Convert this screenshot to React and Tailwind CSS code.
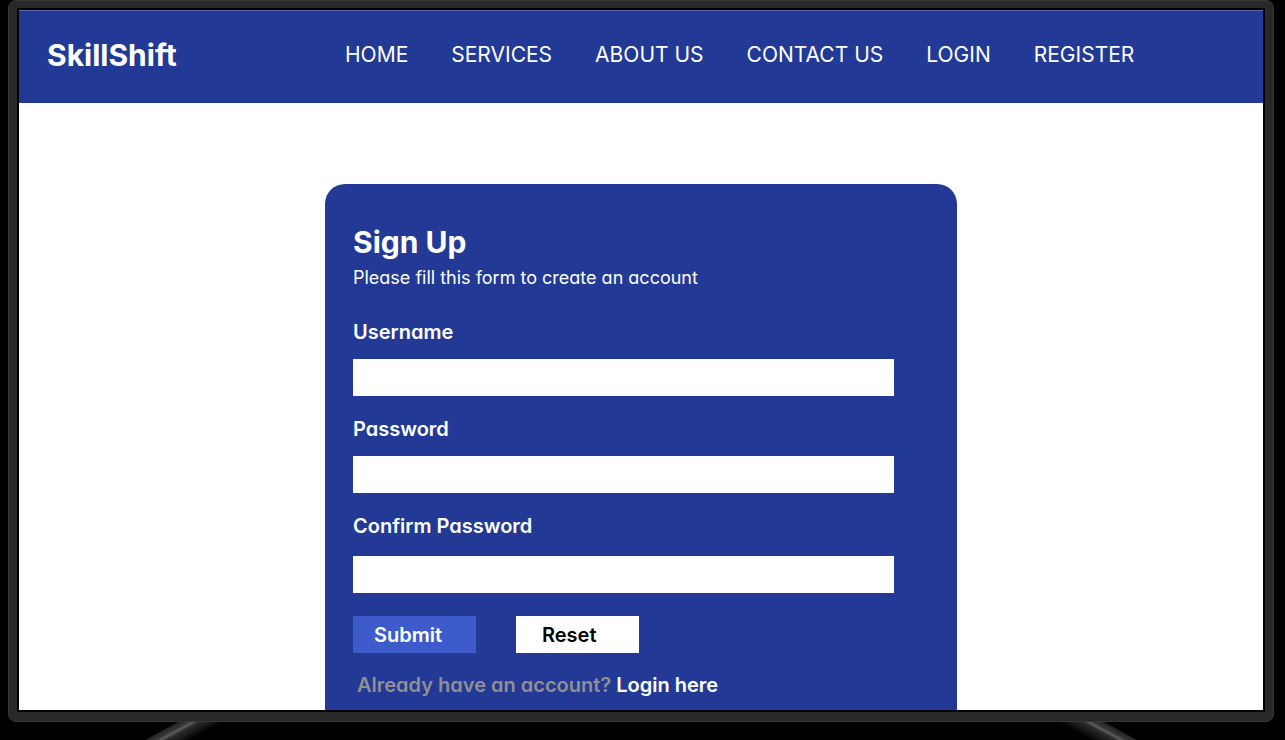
const links = ["HOME", "SERVICES", "ABOUT US", "CONTACT US", "LOGIN", "REGISTER"];

function Field({ id, label, type = "text", labelGap = "mb-[13px]" }) {
  return (
    <div>
      <label htmlFor={id} className={`block text-[20px] leading-7 font-semibold ${labelGap}`}>
        {label}
      </label>
      <input
        id={id}
        name={id}
        type={type}
        className="block h-[37px] w-full bg-white px-3 text-lg text-black outline-none"
      />
    </div>
  );
}

function Foot({ id, flip = false }) {
  return (
    <svg
      viewBox="0 0 84 18"
      className={flip ? "h-[18px] w-[84px] -scale-x-100" : "h-[18px] w-[84px]"}
      aria-hidden="true"
    >
      <defs>
        <linearGradient id={id} gradientUnits="userSpaceOnUse" x1="37" y1="0" x2="47.5" y2="19.3">
          <stop offset="0" stopColor="#222222" />
          <stop offset="0.15" stopColor="#303030" />
          <stop offset="0.24" stopColor="#383838" />
          <stop offset="0.33" stopColor="#5e5e5e" />
          <stop offset="0.46" stopColor="#2c2c2c" />
          <stop offset="0.7" stopColor="#1a1a1a" />
          <stop offset="1" stopColor="#000000" />
        </linearGradient>
      </defs>
      <path d="M4 18 37 0h46L50 18Z" fill={`url(#${id})`} />
    </svg>
  );
}

export default function App() {
  return (
    <div className="flex h-screen flex-col overflow-hidden bg-black pr-[11px] pl-2 font-['Inter','Noto_Sans',sans-serif] text-white [font-feature-settings:'cv11']">
      <div className="flex min-h-0 flex-1 flex-col rounded-lg border border-[#383838] bg-[#282828] px-2 pt-[7px] pb-[9px]">
        <div className="flex min-h-0 flex-1 flex-col overflow-hidden border-2 border-black bg-white">
          <header className="flex h-[93px] shrink-0 items-center border-t border-[#5a6bb0] bg-[#223a96] pr-6 pb-1 pl-7">
            <a href="#home" className="w-[298px] shrink-0 text-[30px] leading-9 font-bold">
              SkillShift
            </a>
            <nav className="flex gap-[43px] text-[21px] leading-8 whitespace-nowrap">
              {links.map((link) => (
                <a key={link} href={`#${link.toLowerCase().replace(" ", "-")}`}>
                  {link}
                </a>
              ))}
            </nav>
          </header>

          <main className="flex min-h-0 flex-1 justify-center pt-[81px]">
            <form
              className="w-[632px] rounded-t-[20px] bg-[#223a96] pt-[42px] pr-[63px] pl-7"
              onSubmit={(event) => event.preventDefault()}
            >
              <h1 className="text-[30px] leading-8 font-bold">Sign Up</h1>
              <p className="mt-2 mb-7 text-[18px] leading-6">
                Please fill this form to create an account
              </p>
              <div className="flex flex-col gap-[19px]">
                <Field id="username" label="Username" />
                <Field id="password" label="Password" type="password" />
                <Field
                  id="confirm-password"
                  label="Confirm Password"
                  type="password"
                  labelGap="mb-4"
                />
              </div>
              <div className="mt-[23px] flex gap-10 text-[20px] leading-7 font-semibold">
                <button type="submit" className="h-[37px] w-[123px] bg-[#3d5bcb] pl-[21px] text-left">
                  Submit
                </button>
                <button type="reset" className="h-[37px] w-[123px] bg-white pl-[26px] text-left text-black">
                  Reset
                </button>
              </div>
              <p className="mt-[18px] pl-1 text-[20px] leading-7 font-semibold whitespace-nowrap text-[#8f8f94]">
                Already have an account?{" "}
                <a href="#login" className="text-white">
                  Login here
                </a>
              </p>
            </form>
          </main>
        </div>
      </div>
      <div className="flex h-[18px] shrink-0 justify-between px-[133px]">
        <Foot id="foot-left" />
        <Foot id="foot-right" flip />
      </div>
    </div>
  );
}
